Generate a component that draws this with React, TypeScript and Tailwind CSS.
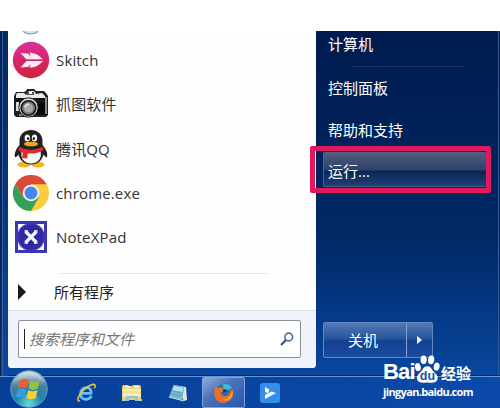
import type { ReactNode } from "react";

const SkitchIcon = () => (
  <svg viewBox="0 0 38 38" className="h-[38px] w-[38px]">
    <defs>
      <linearGradient id="skitch" x1="0" y1="0" x2="0" y2="1">
        <stop offset="0" stopColor="#d9329a" />
        <stop offset="0.55" stopColor="#d8246a" />
        <stop offset="1" stopColor="#cc2434" />
      </linearGradient>
    </defs>
    <circle cx="19" cy="19" r="18.200" fill="url(#skitch)" />
    <path d="M8.500 12l7.500.500 2.500 3-1-3.700c5 0 10 2.500 13.500 6.700H14.500z" fill="#fbe9f0" />
    <path d="M8.500 26.500l7.500-.500 2.500-3-1 3.700c5 0 10-2.500 13.500-6.700H14.500z" fill="#fbe9f0" />
    <path d="M8 19.200h23.500" stroke="#b02a5e" strokeWidth="0.900" />
  </svg>
);

const CameraIcon = () => (
  <svg viewBox="0 0 38 32" className="h-8 w-[38px]">
    <path d="M2 8l2-4h8l2-1 1-2h7l2 2h8l2 2 2 3v19l-2 2H4l-2-2z" fill="#222" />
    <path d="M4 7l1-2h7l2 2 3-4h5l2 3 6-1 3 3v2H4z" fill="#e9e9e9" />
    <path d="M15 4h7v3h-7z" fill="#555" />
    <path d="M17 4h3v2h-3z" fill="#fff" />
    <path d="M3 10h9l-3 3-1 5H3zM24 10h10v3H26z" fill="#111" />
    <path d="M4 14h3v9H4z" fill="#d9d9d9" />
    <path d="M25 14h10v13H22l4-6z" fill="#070707" />
    <path d="M34 9v17M7 27h4" stroke="#ddd" strokeWidth="1.200" />
    <circle cx="16.500" cy="19.500" r="9.700" fill="#dedede" stroke="#161616" />
    <circle cx="16.500" cy="20" r="7.300" fill="#777" stroke="#151515" strokeWidth="1.600" />
    <circle cx="16.500" cy="20" r="4.600" fill="#a9a9a9" />
    <path d="M13 19a4 4 0 0 1 4-3" stroke="#eee" strokeWidth="1.500" fill="none" />
  </svg>
);

const QQIcon = () => (
  <svg viewBox="0 0 34 38" className="h-[38px] w-[34px]">
    <ellipse cx="10" cy="34.500" rx="6.500" ry="3" fill="#f4b41f" />
    <ellipse cx="24" cy="34.500" rx="6.500" ry="3" fill="#f4b41f" />
    <path
      d="M17 0C9.500 0 5.500 5 5.500 11v4C2 19 0 23.500 1 27c.7 1 2.500-1 3.500-2.500C6 31 11 34.500 17 34.500S28 31 29.500 24.500C30.500 26 32.300 28 33 27c1-3.500-1-8-4.500-12v-4C28.500 5 24.500 0 17 0z"
      fill="#222122"
    />
    <path d="M8 20h18c3 8-2 13.500-9 13.500S5.500 28 8 20z" fill="#faf8f5" />
    <ellipse cx="13.300" cy="8" rx="2.700" ry="3.600" fill="#fff" />
    <ellipse cx="20.500" cy="8" rx="2.700" ry="3.600" fill="#fff" />
    <ellipse cx="14" cy="8.500" rx="1.100" ry="1.500" fill="#111" />
    <ellipse cx="19.800" cy="8.500" rx="1.100" ry="1.500" fill="#111" />
    <ellipse cx="17" cy="14" rx="7" ry="2.300" fill="#f2a91e" />
    <path d="M5.500 16.500c7 4.300 16 4.300 23 0l1.200 3.500c-5 3-10.500 4-16 3.500l-.5 5-5-.5.5-5.500-4.500-2z" fill="#e32a2a" />
  </svg>
);

const ChromeIcon = () => (
  <svg viewBox="0 0 36 36" className="h-9 w-9">
    <circle cx="18" cy="18" r="18" fill="#fbcd3f" />
    <path d="M2.410 9A18 18 0 0 0 18 36l7.800-13.500L18 18l-7.800 4.500z" fill="#34a15b" />
    <path d="M2.410 9l7.800 13.500L18 9.200h15.600A18 18 0 0 0 2.410 9z" fill="#d94a3d" />
    <circle cx="18" cy="18" r="8.300" fill="#f4f5f7" />
    <circle cx="18" cy="18" r="6.500" fill="#4687ec" />
  </svg>
);

const NoteXPadIcon = () => (
  <svg viewBox="0 0 32 32" className="h-8 w-8">
    <rect width="32" height="32" fill="#3c36b4" />
    <path
      d="M3 3h8.500C7 4.500 4.500 7 3 11.500zM29 3h-8.500c4.500 1.500 7 4 8.500 8.500zM3 29h8.500C7 27.500 4.500 25 3 20.500zM29 29h-8.500c4.500-1.500 7-4 8.500-8.500z"
      fill="#f6f6ff"
    />
    <circle cx="16" cy="16" r="12.300" fill="#2f2aa2" />
    <path d="M10.500 10.500l11 11M21.500 10.500l-11 11" stroke="#f6f6ff" strokeWidth="3.200" />
    <path d="M9.500 10h3.500M9.500 22h3.500M19 10h3.500M19 22h3.500" stroke="#f6f6ff" strokeWidth="1.500" />
  </svg>
);

const StartOrb = () => (
  <svg viewBox="0 0 38 38" className="h-[38px] w-[38px]">
    <defs>
      <radialGradient id="orb" cx="0.5" cy="0.9" r="0.9">
        <stop offset="0" stopColor="#5fe0d8" />
        <stop offset="0.4" stopColor="#2382a8" />
        <stop offset="0.75" stopColor="#4b7d9e" />
        <stop offset="1" stopColor="#b4cbd6" />
      </radialGradient>
      <linearGradient id="orbShine" x1="0" y1="0" x2="0" y2="1">
        <stop offset="0" stopColor="#fff" stopOpacity="0.6" />
        <stop offset="1" stopColor="#fff" stopOpacity="0" />
      </linearGradient>
    </defs>
    <circle cx="19" cy="19" r="18.300" fill="url(#orb)" stroke="#78a9c5" strokeWidth="0.800" />
    <path d="M2.500 17C3 8 10 2 19 2s16 6 16.500 15C27 13.500 12 13.500 2.500 17z" fill="url(#orbShine)" />
    <path d="M10 10.500c3-2 6-2 9-.3L17.200 18.500c-3-1.600-6.200-1.600-9.400.2z" fill="#e8602e" />
    <path d="M20.200 10.800c3 1.600 6.200 1.500 9.500-.3L27.900 18.500c-3.200 1.800-6.300 1.900-9.400.3z" fill="#8fc440" />
    <path d="M7.500 20c3-1.800 6.200-1.800 9.200-.2l-1.800 8c-3-1.600-6-1.500-9.200.2z" fill="#3a9be0" />
    <path d="M18.200 20.200c3 1.600 6.200 1.500 9.400-.3l-1.800 8c-3.200 1.800-6.400 1.900-9.400.3z" fill="#fbcf36" />
  </svg>
);

const IEIcon = () => (
  <svg viewBox="0 0 20 20" className="h-5 w-5">
    <path
      d="M15.500 13c-1.300 2-3.200 3.300-5.500 3.300-3.400 0-5.400-2.300-5.400-5.400C4.600 7.300 7 4.600 10.500 4.600c3.400 0 5 2.500 4.500 5.700H6"
      fill="none"
      stroke="#69bdf0"
      strokeWidth="2.800"
    />
    <path d="M4 18c-3 .5-2.600-3 .3-7C8.500 5 15 .8 18 1.400c1.600.4 1.300 2.200.3 4" fill="none" stroke="#e7c24b" strokeWidth="1.600" />
  </svg>
);

const ExplorerIcon = () => (
  <svg viewBox="0 0 22 20" className="h-5 w-[22px]">
    <path d="M1 4l1-2h5l1 1h3l1-1h7l1 2v13H1z" fill="#e5d082" />
    <path d="M2 6h18v8H2z" fill="#f8ebac" />
    <path d="M4 4h5M13 4h5" stroke="#fff8d4" strokeWidth="1.500" />
    <path d="M2 9h18" stroke="#e9d58b" />
    <path d="M5 18v-5h12v5h-3v-3H8v3z" fill="#8dc5d9" />
    <path d="M1 17h4M17 17h4" stroke="#c4d6a0" strokeWidth="2" />
  </svg>
);

const NotepadIcon = () => (
  <svg viewBox="0 0 20 20" className="h-5 w-5">
    <path d="M5.500 2L18 4l1 13-3 1z" fill="#dce8df" />
    <path d="M5.500 2l11 2-2.500 13.500L1 14z" fill="#74b9d0" />
    <path d="M6 3l9.500 1.700-.8 4.300L4.300 7z" fill="#b8dfe7" />
    <path d="M4 8l10 2M3 11l10.500 2" stroke="#4d99b9" strokeWidth="0.700" />
    <path d="M1 14l13 3.500 2 .5" stroke="#d5e8cb" fill="none" />
  </svg>
);

const FirefoxIcon = () => (
  <svg viewBox="0 0 20 20" className="h-5 w-5">
    <circle cx="10.500" cy="9.500" r="8.700" fill="#1d6fb0" />
    <path d="M8 2c4-2 8-.5 10 3l-4 2-4-1z" fill="#45b7dc" />
    <path
      d="M2 3l1.500 2C5 4 7 4 8 5l2 .2-1.500 2.300.5 1-2 1c.2 3 4 4.500 7 2.500 2-1.500 2.500-4 1.500-6.500 1.500 1 2 2 2.200 3 .3-1.500 0-3-.5-4.500 2.500 3 3 8 0 12-3.500 4.500-10 5-14 1.500S0 7.500 2 3z"
      fill="#ed6e24"
    />
    <path d="M18.500 8c1 7-5 10.500-10 9 5-.2 8-3 10-9z" fill="#f9bd3c" />
    <path d="M9 7l3-.5c1 1 1 2-.5 2.500l-2 .5z" fill="#17385f" />
  </svg>
);

const PlayerIcon = () => (
  <svg viewBox="0 0 20 20" className="h-5 w-5">
    <rect width="20" height="20" rx="2.500" fill="#328ee9" />
    <path d="M5 4l4.500 2.800-1.800 3.400-2.700-1.500zM5 16v-4l6.500-3.500L16 10z" fill="#fff" />
  </svg>
);

const BaiduPaw = () => (
  <svg viewBox="0 0 28 30" className="h-[29px] w-[27px] shrink-0">
    <g fill="#fff">
      <ellipse cx="4" cy="12.500" rx="3" ry="4.200" transform="rotate(-12 4 12.500)" />
      <ellipse cx="10" cy="5" rx="3.200" ry="4.500" />
      <ellipse cx="17.800" cy="5" rx="3.200" ry="4.500" transform="rotate(8 17.800 5)" />
      <ellipse cx="23.500" cy="12" rx="3" ry="4.200" transform="rotate(12 23.500 12)" />
      <path d="M13.800 11.500c4 0 4.800 3.800 7.500 6.500 3 2.800 4 5 2.800 8-1.300 3-4 3-10.300 2.500-6.300.5-9 .5-10.300-2.500-1.200-3-.2-5.200 2.800-8 2.700-2.700 3.500-6.500 7.500-6.500z" />
    </g>
    <text x="14" y="26" textAnchor="middle" fontSize="13" fontWeight="700" fontFamily="Liberation Sans, sans-serif" fill="#1753a3">
      du
    </text>
  </svg>
);

type Program = { name: string; icon: ReactNode };

const programs: Program[] = [
  { name: "Skitch", icon: <SkitchIcon /> },
  { name: "抓图软件", icon: <CameraIcon /> },
  { name: "腾讯QQ", icon: <QQIcon /> },
  { name: "chrome.exe", icon: <ChromeIcon /> },
  { name: "NoteXPad", icon: <NoteXPadIcon /> },
];

const StartMenuLeft = () => (
  <div className="flex h-[337px] w-[308px] flex-col overflow-hidden rounded-b bg-[#fefefe] text-[15px] text-[#333]">
    <div className="flex h-[7px] items-start pl-[13px]">
      <svg viewBox="0 0 20 5" className="h-[5px] w-5">
        <path d="M2 0c3 4 12 4 15 0" fill="#d5e4ef" stroke="#7f9fbe" strokeWidth="1.200" />
      </svg>
    </div>
    {programs.map((program) => (
      <div key={program.name} className="flex h-[44.25px] shrink-0 items-center">
        <div className="ml-1 flex w-[38px] justify-center">{program.icon}</div>
        <span className="ml-1.5 leading-5 tracking-[0.15px]">{program.name}</span>
      </div>
    ))}
    <div className="mt-[14px] ml-[52px] h-px w-[207px] shrink-0 bg-[#dfe4ea]" />
    <div className="flex h-9 shrink-0 items-center text-[#222]">
      <svg viewBox="0 0 8 16" className="ml-[10px] h-4 w-2">
        <path d="M0 0l8 8-8 8z" fill="#1b1b1b" />
      </svg>
      <span className="ml-7">所有程序</span>
    </div>
    <div className="flex flex-1 items-start border-t border-[#d5dce7] bg-[#f0f3fb] pt-[9px] pl-[10px]">
      <div className="flex h-[38px] w-[283px] items-center rounded-xs border border-[#8b8f98] bg-white pr-1.5 pl-[5px]">
        <div className="h-5 w-px bg-[#222]" />
        <span className="ml-1 flex-1 text-[15px] text-[#777] italic">搜索程序和文件</span>
        <svg viewBox="0 0 14 14" className="h-[14px] w-[14px]" fill="none">
          <circle cx="8.700" cy="5" r="3.900" stroke="#4d6f96" strokeWidth="1.600" />
          <path d="M6 8l-5 5" stroke="#354f73" strokeWidth="2" />
        </svg>
      </div>
    </div>
  </div>
);

const StartMenuRight = () => (
  <div className="flex w-[182px] flex-col text-[15px] text-white">
    <div className="flex h-[27px] items-center pl-3">计算机</div>
    <div className="mt-[8px] ml-9 h-px w-[112px] bg-[#1d376c]" />
    <div className="flex h-[42px] items-center pl-3">控制面板</div>
    <div className="flex h-[42px] items-center pl-3">帮助和支持</div>
    {/* highlighted entry with the pink marker around it */}
    <div className="mt-[-5px] -ml-[6px] flex h-[47px] w-[181px] rounded-xs border-[5px] border-[#e2185f] p-px pr-0 pl-[8px]">
      <div className="flex flex-1 items-center rounded-xs border border-r-0 border-[#4d6286] bg-[linear-gradient(#505d7a,#2c406a_52%,#0b2452_54%,#1c4178)] pt-[3px] pl-1">
        运行...
      </div>
    </div>
    <div className="mt-[129px] ml-[7px] flex h-9 w-[110px] rounded-xs border border-[#6387bf] bg-[linear-gradient(#5578b3,#24529b_48%,#124193_52%,#1c4c9f)]">
      <div className="flex w-[83px] items-center justify-center border-r border-[#86a2cf] pr-1">关机</div>
      <div className="flex flex-1 items-center justify-center">
        <svg viewBox="0 0 5 8" className="h-2 w-[5px]">
          <path d="M0 0l5 4-5 4z" fill="#fff" />
        </svg>
      </div>
    </div>
  </div>
);

const Taskbar = () => (
  <div className="flex h-8 items-center border-t border-[#6a94cd] bg-linear-to-r from-[#073f98] to-[#0b4aaa] shadow-[0_-1px_0_#062a70]">
    <div className="relative z-10 -mt-[7px] ml-[10px] h-[38px] shrink-0">
      <StartOrb />
    </div>
    <div className="ml-[27px] flex w-[21px] justify-center">
      <IEIcon />
    </div>
    <div className="ml-[25px]">
      <ExplorerIcon />
    </div>
    <div className="ml-[25px]">
      <NotepadIcon />
    </div>
    <div className="ml-[14px] flex h-[31px] w-[43px] items-center justify-center rounded-xs border border-[#7ea4db] bg-linear-to-br from-[#92acd8] via-[#4c73b9] via-40% to-[#2257ae]">
      <FirefoxIcon />
    </div>
    <div className="ml-[15px]">
      <PlayerIcon />
    </div>
  </div>
);

const Watermark = () => (
  <div className="absolute top-[354px] left-[383px] text-white">
    <div className="flex h-[30px] items-end font-bold">
      <span className="w-[31px] font-['Liberation_Sans'] text-[22px] leading-[24px] tracking-[-0.8px]">Bai</span>
      <BaiduPaw />
      <span className="text-[15px] leading-[22px]">经验</span>
    </div>
    <div className="mt-px font-['Open_Sans'] text-[11px] leading-[14px] font-bold tracking-[-0.65px]">jingyan.baidu.com</div>
  </div>
);

export default function App() {
  return (
    <div className="relative h-[408px] w-[500px] overflow-hidden bg-white pt-[31px] font-['Open_Sans','Noto_Sans_CJK_SC',sans-serif]">
      <div className="flex h-[345px] border-l border-[#08265c] bg-linear-to-b from-[#001b4e] via-[#012965] via-60% to-[#0947a0] pl-px">
        <div className="w-[6px] shrink-0 border-l border-[#375f99] bg-linear-to-b from-[#042860] to-[#0b46a0]" />
        <StartMenuLeft />
        <StartMenuRight />
        <div className="h-[344px] w-px shrink-0 bg-[#34588f]" />
      </div>
      <Taskbar />
      <Watermark />
    </div>
  );
}
